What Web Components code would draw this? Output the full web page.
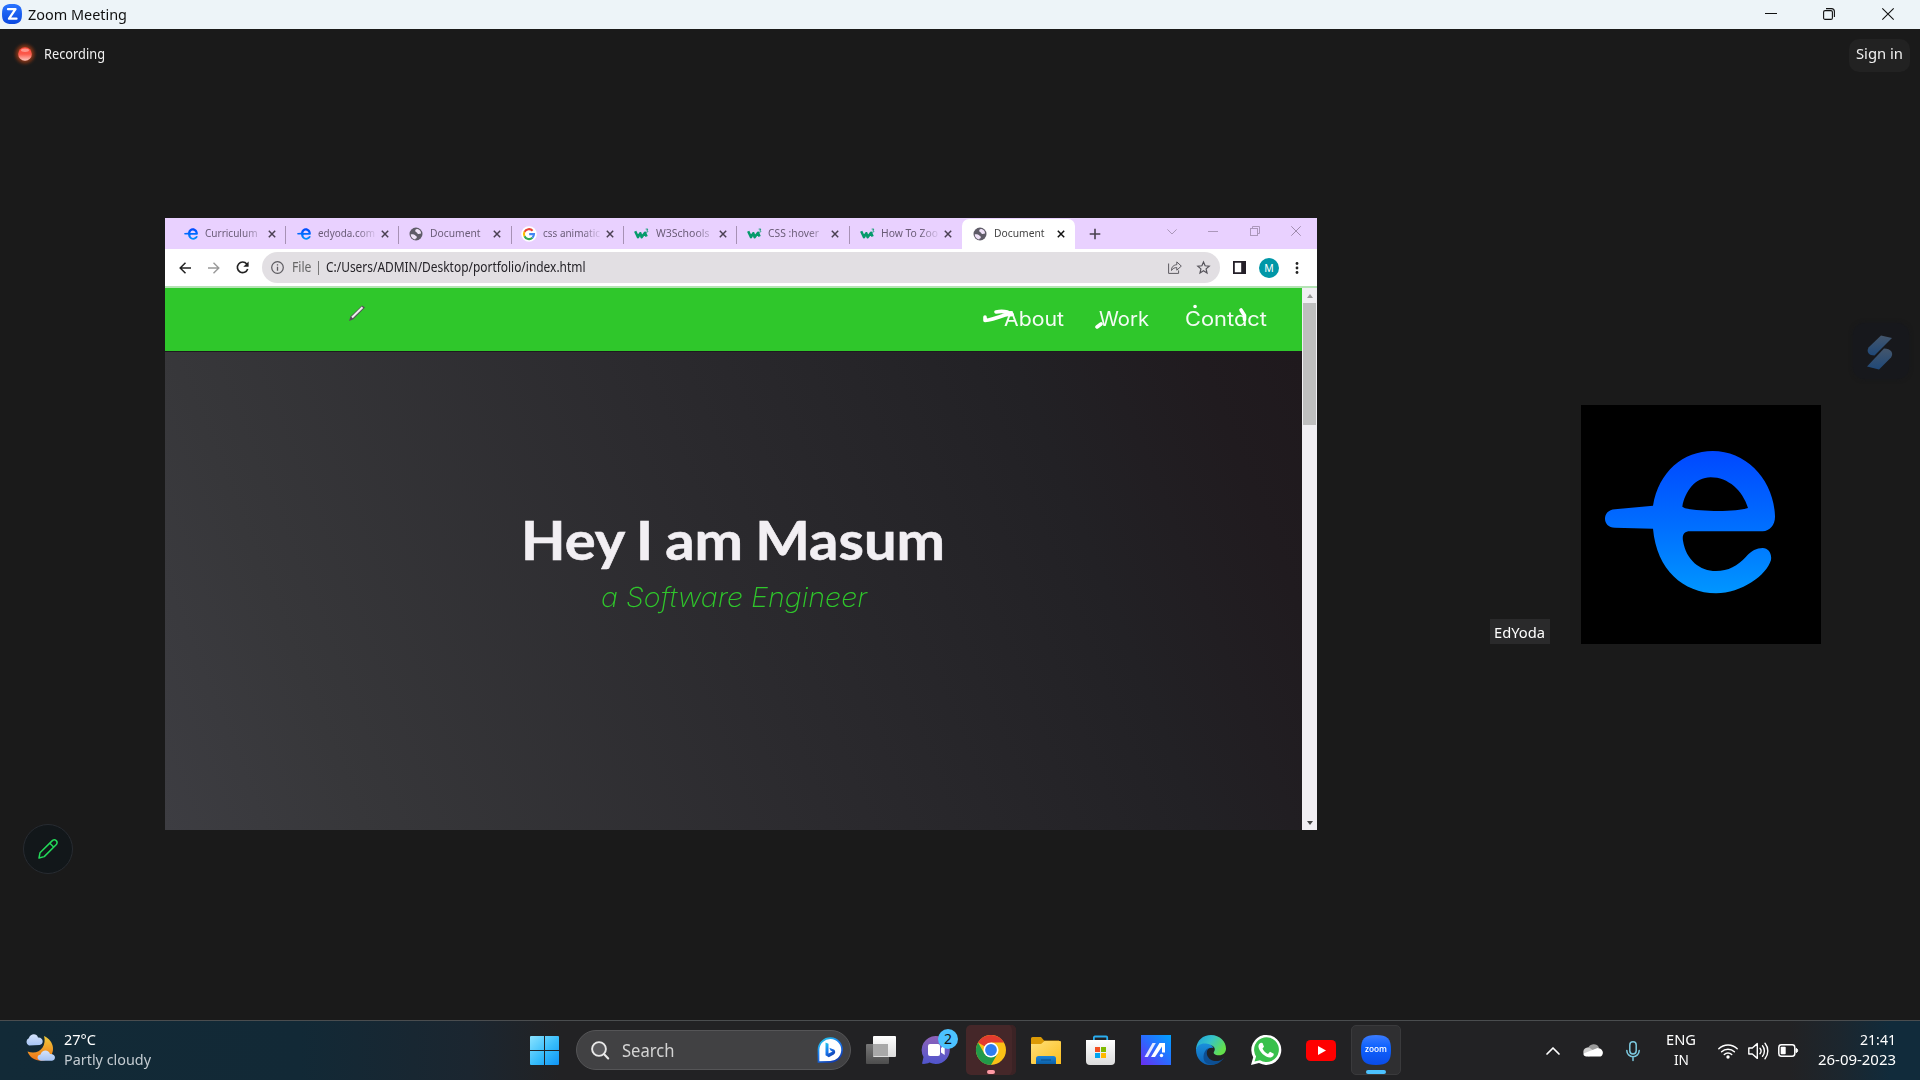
<!DOCTYPE html>
<html lang="en">
<head>
<meta charset="utf-8">
<title>Zoom Meeting</title>
<style>
html,body{margin:0;height:100%;overflow:hidden;background:#1a1a1a;font-family:"Noto Sans","Open Sans",sans-serif}
</style>
</head>
<body>
<meeting-desktop></meeting-desktop>
<script>
const define = (name, css, html, ready) => customElements.define(name, class extends HTMLElement {
  constructor(){ super(); this.attachShadow({mode:'open'}); }
  connectedCallback(){
    if (this.done) return; this.done = true;
    this.shadowRoot.innerHTML = `<style>:host{box-sizing:border-box;display:block}*{box-sizing:border-box}${css}</style>` + (typeof html === 'function' ? html(this) : html);
    if (ready) ready(this);
  }
});

/* One line of text squeezed or stretched to a given width */
define('fit-text', `:host{display:block;flex:none;white-space:nowrap}span{display:inline-block;transform-origin:0 50%}`,
  el => `<span>${el.getAttribute('text')}</span>`,
  el => {
    const w = +el.getAttribute('w'), s = el.shadowRoot.querySelector('span');
    const natural = s.getBoundingClientRect().width;
    el.style.width = w + 'px';
    s.style.transform = `scaleX(${w / natural})`;
    s.style.marginRight = Math.min(0, w - natural) + 'px';
  });

const E_MARK = `<path fill="url(#eg)" fill-rule="evenodd" d="M549 347C566 245 640 183 728 183C830 183 911 270 915 378C916 405 900 423 878 424L660 424C642 424 636 435 639 452C648 510 690 543 738 543C775 543 803 527 828 500C845 482 860 474 878 474C895 474 906 490 903 510C890 555 815 610 738 610C640 608 560 540 549 416L435 413C395 412 395 360 435 358ZM637 350C645 305 675 262 722 262C775 262 818 302 834 354C800 366 700 366 645 355Z"/>`;
const E_GRAD = `<defs><linearGradient id="eg" x1="0" y1="0" x2="0" y2="1"><stop offset="0" stop-color="#0048ff"/><stop offset=".5" stop-color="#006cff"/><stop offset="1" stop-color="#0096ff"/></linearGradient></defs>`;

const ICONS = {
  zoomz: [20,20,`<defs><linearGradient id="z" x2="0" y2="1"><stop stop-color="#2a74ff"/><stop offset="1" stop-color="#0b49e0"/></linearGradient></defs><path d="M10 0C17.5 0 20 2.5 20 10S17.500 20 10 20 0 17.500 0 10 2.500 0 10 0Z" fill="url(#z)"/><path d="M6 5.200h7.500L7 14.700h7.500" fill="none" stroke="#fff" stroke-width="2.300" stroke-linecap="round" stroke-linejoin="round"/>`],
  min: [12,12,`<path d="M0 5.500h12" stroke="#111" stroke-width="1"/>`],
  restore: [12,12,`<rect x=".6" y="2.600" width="8.800" height="8.800" rx="1.500" fill="none" stroke="#111" stroke-width="1.100"/><path d="M3 .6h5.400a3 3 0 0 1 3 3V9" fill="none" stroke="#111" stroke-width="1.100"/>`],
  close: [12,12,`<path d="M.3.3l11.400 11.400M11.700.3.3 11.700" stroke="#111" stroke-width="1.100"/>`],
  rec: [26,26,`<defs><radialGradient id="g"><stop offset=".45" stop-color="#9a3c1c"/><stop offset=".7" stop-color="#5c2a16" stop-opacity=".8"/><stop offset="1" stop-color="#1a1a1a" stop-opacity="0"/></radialGradient><linearGradient id="r" x2="0" y2="1"><stop stop-color="#ff4a3c"/><stop offset=".5" stop-color="#fb584a"/><stop offset="1" stop-color="#ffc9c0"/></linearGradient></defs><circle cx="13" cy="13" r="13" fill="url(#g)"/><circle cx="13" cy="13" r="6.800" fill="url(#r)"/><ellipse cx="13" cy="9.300" rx="4" ry="1.700" fill="#ffa59b" opacity=".8"/>`],
  sband: [26,35,`<defs><linearGradient id="a" x2="0" y2="1"><stop stop-color="#44566c"/><stop offset="1" stop-color="#1f4878"/></linearGradient></defs><path d="M14 .5 25 3 7.500 20.500C2 20.500-1 17 1.500 12.500Z" fill="url(#a)"/><path d="M17 13.500C24 13.500 27 18 24 22.500L12 34.500 0 31.500Z" fill="url(#a)"/>`],
  pencil: [20,20,`<g fill="none" stroke="#23d959" stroke-width="1.500" stroke-linejoin="round"><path d="M1 19 2 13.800 14.600 1.400c2.600-1.800 5.600 1.200 4 3.800L6.200 17.600Z"/><path d="M11.800 4.200l4.100 4.100"/></g>`],
  e: [14,12,`${E_GRAD}<svg viewBox="400 180 520 433" width="14" height="12">${E_MARK}</svg>`],
  globe: [14,14,`<circle cx="7" cy="7" r="6.500" fill="#5f5c68"/><path d="M8.500 1.900C6.500 1.700 6 3 6.300 4.200 6.600 5.300 8 5 8.300 6.200s2.500.6 3.700.4c.3-2-1-4.200-3.500-4.700Z" fill="#efe2f8"/><path d="M1.800 7.200c1.700-.2 4 .2 4.600 1.300s1.600.6 1.400 1.900-1.500.8-1.600 2C3.500 12 1.600 9.500 1.800 7.200Z" fill="#efe2f8"/>`],
  google: [16,16,`<circle cx="8" cy="8" r="7.800" fill="#fff"/><g fill="none" stroke-width="2.100"><path d="M11.600 4.700A5 5 0 0 0 3.500 5.900" stroke="#ea4335"/><path d="M3.500 5.800a5 5 0 0 0 0 4.500" stroke="#fbbc05"/><path d="M3.500 10.200a5 5 0 0 0 7.900 1.600" stroke="#34a853"/><path d="M11.400 11.700A5 5 0 0 0 13 8.100H8.200" stroke="#4285f4"/></g>`],
  w3: [15,12,`<path d="M1.200 3.200 4 9.200 6.300 5.200 7.600 9.200 11 4.800 12.600 8.600" fill="none" stroke="#069b6c" stroke-width="2.500" stroke-linejoin="round"/><path d="M11.700 1.100h2.200l-1 1.300c1.600.3 1.200 2.300-1.300 1.700" fill="none" stroke="#069b6c" stroke-width=".9"/>`],
  x: [8,8,`<path d="M.8.8l6.400 6.400M7.200.8.8 7.200" stroke="currentColor" stroke-width="1.500"/>`],
  plus: [12,12,`<path d="M6 .7v10.600M.7 6h10.600" stroke="#49424f" stroke-width="1.600"/>`],
  cchev: [10,6,`<path d="M.4.4 5 5 9.600.4" fill="none" stroke="#ab97ba"/>`],
  cmin: [10,6,`<path d="M0 2.500h10" stroke="#ab97ba"/>`],
  crest: [10,10,`<rect x=".5" y="2.500" width="7" height="7" fill="none" stroke="#ab97ba"/><path d="M2.500 2.500v-2h7v7h-2" fill="none" stroke="#ab97ba"/>`],
  cclose: [10,10,`<path d="M.3.3l9.400 9.400M9.700.3.3 9.700" stroke="#a08cae"/>`],
  back: [12,12,`<path d="M12 6H1.200M6.500.8 1.200 6l5.300 5.200" fill="none" stroke="currentColor" stroke-width="1.500"/>`],
  fwd: [12,12,`<path d="M0 6h10.800M5.500.8 10.800 6l-5.300 5.200" fill="none" stroke="currentColor" stroke-width="1.400"/>`],
  reload: [13,13,`<path d="M10.800 3A5.300 5.300 0 1 0 11.700 8" fill="none" stroke="#222" stroke-width="1.600"/><path d="M12.600.4v5.300H7.300Z" fill="#222"/>`],
  info: [13,13,`<circle cx="6.500" cy="6.500" r="5.800" fill="none" stroke="#5c5a60" stroke-width="1.200"/><path d="M6.500 5.700v4M6.500 3.300v1.300" stroke="#5c5a60" stroke-width="1.300"/>`],
  share: [14,13,`<g fill="none" stroke="#5d5b61"><path d="M.6 2.500v9.900h10v-3"/><path d="M3.500 9.500C3.500 5.500 6 3.900 8.800 3.700V.9l4.500 4.200-4.500 4.100V6.600C6.500 6.600 5 7.200 3.500 9.500Z"/></g>`],
  star: [13,13,`<path d="M6.500 1 8.100 4.800l4.100.4-3.100 2.700.9 4.100-3.500-2.200L3 12l.9-4.100L.8 5.200l4.100-.4Z" fill="none" stroke="#55535a" stroke-width="1.200"/>`],
  side: [13,13,`<path d="M0 0h13v13H0ZM1.800 1.800v9.400h6.400V1.800Z" fill="#241f28" fill-rule="evenodd"/>`],
  dots: [4,12,`<g fill="#222"><circle cx="2" cy="1.500" r="1.400"/><circle cx="2" cy="6" r="1.400"/><circle cx="2" cy="10.500" r="1.400"/></g>`],
  weather: [30,28,`<defs><linearGradient id="m" x2="0" y2="1"><stop stop-color="#f0cc3c"/><stop offset="1" stop-color="#ef7216"/></linearGradient><linearGradient id="c" x2="0" y2="1"><stop stop-color="#d4e2fb"/><stop offset="1" stop-color="#a6c4f5"/></linearGradient></defs><path d="M19 2C30 7 31 20 22 25.500 14 29 5 25 2.500 17.500 14 22 22 12 19 2Z" fill="url(#m)"/><path d="M4 11.500a4 4 0 0 1-.3-7.300C5.500-.8 12-.8 13 3.600c6-.4 6 7.400 1.600 7.400Z" fill="url(#c)"/><path d="M16 26.700c-4.500-.5-4.500-5.700-.5-6.200 1.500-5.300 8.500-5 9.500-.5 6-.5 6.500 6 2 6.700Z" fill="url(#c)"/>`],
  win: [29,29,`<defs><linearGradient id="w" x2="1" y2="1"><stop stop-color="#8ae3ff"/><stop offset=".55" stop-color="#36bcfb"/><stop offset="1" stop-color="#0f93f5"/></linearGradient></defs><path d="M1 0h13v14H0V1a1 1 0 0 1 1-1ZM15 0h13a1 1 0 0 1 1 1v13H15ZM0 15h14v14H1a1 1 0 0 1-1-1ZM15 15h14v13a1 1 0 0 1-1 1H15Z" fill="url(#w)"/>`],
  search: [18,19,`<circle cx="8" cy="8" r="6.900" fill="#5a5a5d" stroke="#e9e9e9" stroke-width="1.900"/><path d="M12.900 13 17.200 17.500" stroke="#e9e9e9" stroke-width="2.100" stroke-linecap="round"/>`],
  bing: [26,26,`<defs><linearGradient id="b" x1="0" x2=".6" y2="1"><stop stop-color="#27cfe8"/><stop offset=".5" stop-color="#1b7df0"/><stop offset="1" stop-color="#123fb3"/></linearGradient></defs><path d="M1.500 25V12.500A11.800 11.800 0 1 1 13 24.800Z" fill="#fff" stroke="url(#b)" stroke-width="1.700"/><path d="M8.500 5.500 11.500 6.800v9.700l4-2-2-1-1.200-2.800 5 2c1.500 1.700 1 3.800-.5 4.700l-5 2.900-3.300-2Z" fill="url(#b)"/>`],
  task: [30,28,`<defs><linearGradient id="t" x2="0" y2="1"><stop stop-color="#fff"/><stop offset="1" stop-color="#dcdcdc"/></linearGradient><linearGradient id="u" x2="0" y2="1"><stop stop-color="#777"/><stop offset="1" stop-color="#4d4d4d"/></linearGradient></defs><rect y="8" width="23" height="20" rx="1" fill="url(#u)"/><rect x="7" width="23" height="21" rx="1" fill="url(#t)"/><path d="M7 8h15v12H7Z" fill="#a8a8a8"/>`],
  chat: [30,30,`<defs><linearGradient id="p" x2="0" y2="1"><stop stop-color="#8f62b8"/><stop offset="1" stop-color="#4f55cd"/></linearGradient></defs><path d="M14.500 1a14 14 0 1 1-6 26.500C6 29 3 29 1 28.800L2.500 22A14 14 0 0 1 14.500 1Z" fill="url(#p)"/><rect x="7" y="9" width="12" height="12" rx="2" fill="#fff"/><path d="m20 13 3.700-3v10L20 17.500Z" fill="#fff"/>`],
  chrome: [30,30,`<circle cx="15" cy="15" r="15" fill="#fbc116"/><path d="M15 15 2 7.500A15 15 0 0 1 28 7.500H15Z" fill="#e33b2e"/><path d="M2 7.500A15 15 0 0 0 15 30l6.500-11.300L15 22 8.500 18.700Z" fill="#229a49"/><circle cx="15" cy="15" r="7.600" fill="#fff"/><circle cx="15" cy="15" r="5.900" fill="#2f7df0"/>`],
  folder: [30,27,`<defs><linearGradient id="f" x2="1" y2="1"><stop stop-color="#ffe07a"/><stop offset="1" stop-color="#fcbe1e"/></linearGradient><linearGradient id="h" x2="0" y2="1"><stop stop-color="#1e85d8"/><stop offset="1" stop-color="#0b60a8"/></linearGradient></defs><path d="M0 1.500A1.500 1.500 0 0 1 1.500 0H10l3 3.500h15L28 8H0Z" fill="#dc9a06"/><path d="M0 7h10l3.500-3H29a1 1 0 0 1 1 1v22H1a1 1 0 0 1-1-1Z" fill="url(#f)"/><path d="M5 27v-5.500A2.500 2.500 0 0 1 7.500 19h15a2.500 2.500 0 0 1 2.500 2.500V27Z" fill="url(#h)"/><path d="M10 23h10" stroke="#0a4c87"/>`],
  store: [30,30,`<defs><linearGradient id="s" x2="0" y2="1"><stop stop-color="#fff"/><stop offset="1" stop-color="#dcdcdc"/></linearGradient></defs><path d="M7.900 7V2.500a1 1 0 0 1 1-1h11.300a1 1 0 0 1 1 1V7" fill="none" stroke="#2aaef0" stroke-width="1.800"/><path d="M0 5h29v21a4 4 0 0 1-4 4H4a4 4 0 0 1-4-4Z" fill="url(#s)"/><path d="M9 12h5v5H9Z" fill="#f25022"/><path d="M15 12h5v5h-5Z" fill="#7fba00"/><path d="M9 18h5v5H9Z" fill="#00a4ef"/><path d="M15 18h5v5h-5Z" fill="#ffb900"/>`],
  asus: [30,30,`<defs><linearGradient id="y" x1="0" y1="1" x2="1" y2="0"><stop stop-color="#6a2df0"/><stop offset=".5" stop-color="#2a6bff"/><stop offset="1" stop-color="#00a2ff"/></linearGradient></defs><path d="M0 0h30v30H0Z" fill="url(#y)"/><path d="M3.500 22 11.500 8h3.300L6.800 22Z" fill="#e4e9ff"/><path d="M10 22 18.500 8H24v9.500h-3v-6L14 22Z" fill="#fff"/><circle cx="20.500" cy="20.500" r="1.700" fill="#fff"/>`],
  edge: [30,30,`<defs><linearGradient id="k" x2="1" y2=".5"><stop stop-color="#1c9fdc"/><stop offset=".5" stop-color="#36c3c9"/><stop offset="1" stop-color="#63e04c"/></linearGradient><linearGradient id="l" x2="0" y2="1"><stop stop-color="#1a8fdc"/><stop offset="1" stop-color="#0d62b4"/></linearGradient></defs><path d="M0 14C1 5 7 0 15 0c9 0 15 6.500 15 13.500 0 4-3 6.800-7 6.800-4.500 0-6-2-5-3.500 2-3 0-6-3.500-6.500C9 9.500 3 11 0 15Z" fill="url(#k)"/><path d="M0 15C1 10 5 8 10 8.500c3.500.3 6.500 1.800 7.500 4.500-4.500-1.500-8 2-7.500 6.500.4 4 4 9 9 9.800C9 32.500 0 25 0 15Z" fill="url(#l)"/><path d="M14 12.500c-3.500 2-4 6-2 9.500s7 4.500 10 4 5-2 6-3.500C24 30 14 32 9 27 6 23 7.500 14 14 12.500Z" fill="#0d4f93"/>`],
  whats: [30,30,`<path d="M0 30l2.200-7.800A15 15 0 1 1 8 28Z" fill="#fff"/><path d="M3.500 26.600l1.600-5.200A12.400 12.400 0 1 1 9 25.200Z" fill="#39c04c"/><path d="M10 7.800c-1.500.3-2.800 2-2.500 4.200.6 4.500 6.500 10.500 11.500 10.500 2 0 4-1.500 3.800-3.800l-3.800-2-2 2.200c-2.500-.8-4.500-2.800-5.500-5.300l1.500-1.800L11.500 8Z" fill="#fff"/>`],
  yt: [30,21,`<rect width="30" height="21" rx="4.500" fill="#f00"/><path d="M12 6v9l8-4.500Z" fill="#fff"/>`],
  zoomapp: [30,30,`<defs><linearGradient id="v" x2="0" y2="1"><stop stop-color="#3c7dff"/><stop offset=".4" stop-color="#0f62fe"/><stop offset="1" stop-color="#0a4ce8"/></linearGradient></defs><path d="M15 0C26.500 0 30 3.500 30 15S26.500 30 15 30 0 26.500 0 15 3.500 0 15 0Z" fill="url(#v)"/>`],
  up: [14,8,`<path d="M1 7l6-6 6 6" fill="none" stroke="#fff" stroke-width="1.700" stroke-linecap="round" stroke-linejoin="round"/>`],
  cloud: [20,14,`<path d="M5 5.500A6 6 0 0 1 16 4.500L14 8 3 9Z" fill="#9b9b9b"/><path d="M.5 10.500C-.5 6 3 4 6 4.500l6 4-6 5Z" fill="#cfcfcf"/><path d="M3 13.500C1 13 .3 12 .5 10.500L14.500 5C18 5 20.300 8 19.800 10.500S18 13.500 16.500 13.500Z" fill="#fff"/>`],
  mic: [14,20,`<g fill="none" stroke="#7cc8de" stroke-width="1.500" stroke-linecap="round"><rect x="3.800" y=".8" width="6.400" height="12.200" rx="3.200"/><path d="M.8 9.500a6.200 6.200 0 0 0 12.400 0M7 16v3.500"/></g>`],
  wifi: [20,16,`<g fill="none" stroke="#fff" stroke-width="1.500" stroke-linecap="round"><path d="M.8 5.800a13 13 0 0 1 18.400 0M3.600 8.800a9 9 0 0 1 12.800 0M6.300 11.500a5.300 5.300 0 0 1 7.400 0"/></g><circle cx="10" cy="14" r="1.700" fill="#fff"/>`],
  vol: [21,18,`<g fill="none" stroke="#fff" stroke-width="1.400" stroke-linecap="round" stroke-linejoin="round"><path d="M.8 6h3.500L9.300 1.600v14.800L4.300 12H.8Z"/><path d="M12 6.200a4.500 4.500 0 0 1 0 5.600M14.500 3.800a8 8 0 0 1 0 10.400M17 1.300a12 12 0 0 1 0 15.400"/></g>`],
  batt: [20,13,`<rect x=".8" y=".8" width="16" height="11.400" rx="2.600" fill="none" stroke="#fff" stroke-width="1.500"/><rect x="2.700" y="2.800" width="5" height="7.400" rx=".8" fill="#fff"/><path d="M18 4.500c2.200 0 2.200 4 0 4Z" fill="#fff" stroke="#fff"/>`],
  pen: [18,18,`<path d="M1 17 2.500 12.500 14 1.500 17 3.500 5 15.500Z" fill="#56505a"/><path d="M4 13.500 14.500 3.300" stroke="#eee" stroke-width="2"/>`]
};
define('ui-icon', `:host{flex:none;line-height:0}svg{display:block;overflow:visible}`,
  el => { const [w,h,b] = ICONS[el.getAttribute('n')]; return `<svg width="${w}" height="${h}" viewBox="0 0 ${w} ${h}">${b}</svg>`; });

define('title-bar', `:host{display:flex;height:29px;flex:none;background:#edf4f8;padding:4px 26px 0 2px;color:#111}
  fit-text{font-size:15px;line-height:21px;margin:0 0 0 5.500px}.c{margin:4px 0 0 auto;display:flex}`,
  `<ui-icon n="zoomz"></ui-icon><fit-text w="99" text="Zoom Meeting"></fit-text>
   <div class="c"><ui-icon n="min"></ui-icon><ui-icon n="restore" style="margin:0 47px 0 46px"></ui-icon><ui-icon n="close"></ui-icon></div>`);

define('meeting-header', `:host{display:flex;justify-content:space-between;height:43px;padding:10px 10px 0 12px;color:#f0f0f0}
  .r{display:flex;gap:6px;height:26px;margin-top:2px}.r fit-text{font-size:13.500px;line-height:20px;margin-top:3px}
  .s{width:61px;height:33px;border-radius:10px;background:#222;padding:3px 7px}.s fit-text{font-size:15px;line-height:22px}`,
  `<div class="r"><ui-icon n="rec"></ui-icon><fit-text w="61" text="Recording"></fit-text></div><div class="s"><fit-text w="47" text="Sign in"></fit-text></div>`);

define('browser-tab', `:host{width:112.700px;height:30px;flex:none;display:flex;align-items:center;position:relative;padding-left:9px;color:#6a5c77}
  :host([on]){background:#fff;border-radius:7px 7px 0 0;color:#444}
  .i{width:17px;display:flex;justify-content:center}.t{width:58px;margin:-2.500px 0 0 5.500px;height:20px;font-size:11.500px;line-height:20px}
  .f{-webkit-mask-image:linear-gradient(90deg,#000 68%,rgba(0,0,0,.15) 98%)}
  .x{margin-left:5px;color:#4b4053}:host([on]) .x{color:#111}
  i{position:absolute;right:0;top:7px;width:1px;height:18px;background:#a791b5}:host([on]) i,:host([last]) i{display:none}`,
  el => `<div class="i"><ui-icon n="${el.getAttribute('icon')}"></ui-icon></div><div class="t ${el.hasAttribute('fade')?'f':''}"><fit-text w="${el.getAttribute('w')}" text="${el.getAttribute('label')}"></fit-text></div><ui-icon class="x" n="x"></ui-icon><i></i>`);

define('tab-strip', `:host{display:flex;height:31px;background:#e9d1ff;padding:1px 16px 0 8.500px}
  .p{margin:9px 0 0 13.500px}.c{margin:7px 0 0 auto;display:flex;gap:31.300px}.c ui-icon:first-child,.c ui-icon:nth-child(2){margin-top:3px}`,
  `<browser-tab icon="e" label="Curriculum" w="52.500" fade></browser-tab><browser-tab icon="e" label="edyoda.com" w="57" fade></browser-tab><browser-tab icon="globe" label="Document" w="50.500"></browser-tab><browser-tab icon="google" label="css animatic" w="57" fade></browser-tab><browser-tab icon="w3" label="W3Schools" w="53.500" fade></browser-tab><browser-tab icon="w3" label="CSS :hover" w="51" fade></browser-tab><browser-tab icon="w3" label="How To Zoo" w="57" fade last></browser-tab><browser-tab icon="globe" label="Document" w="50.500" on></browser-tab>
   <ui-icon class="p" n="plus"></ui-icon><div class="c"><ui-icon n="cchev"></ui-icon><ui-icon n="cmin"></ui-icon><ui-icon n="crest"></ui-icon><ui-icon n="cclose"></ui-icon></div>`);

define('address-bar', `:host{display:flex;align-items:center;height:39px;background:#fff;border-bottom:2px solid #b5e3b5;padding:0 18px 0 13.500px}
  .b{flex:1;height:31px;border-radius:16px;background:#e2dfe3;display:flex;align-items:center;padding:0 10px 0 9.500px;margin:0 0 0 13px;font-size:13.500px;line-height:20px;color:#252328}
  .b i{width:1px;height:14px;background:#777;margin:0 7.500px 0 6.500px}.b .sp{flex:1}.b fit-text{margin-top:-1px}
  .m{width:20px;height:20px;border-radius:50%;background:#0097a7;color:#fff;font-size:10.500px;line-height:20px;text-align:center;margin:0 16px 0 13px}`,
  `<ui-icon n="back" style="color:#222"></ui-icon><ui-icon n="fwd" style="color:#999;margin:0 16px 0 17px"></ui-icon><ui-icon n="reload"></ui-icon>
   <div class="b"><ui-icon n="info"></ui-icon><fit-text style="margin-left:7.500px;color:#666" w="19.500" text="File"></fit-text><i></i><fit-text w="259.500" text="C:/Users/ADMIN/Desktop/portfolio/index.html"></fit-text><span class="sp"></span><ui-icon n="share"></ui-icon><ui-icon n="star" style="margin-left:15px"></ui-icon></div>
   <ui-icon n="side" style="margin-left:13px"></ui-icon><div class="m">M</div><ui-icon n="dots"></ui-icon>`);

define('site-page', `:host{flex:1;display:flex;flex-direction:column;min-width:0}
  nav{position:relative;height:63px;flex:none;background:#2fc72b;display:flex;justify-content:flex-end;padding:15px 35.500px 0 0;color:#f4fbf4;font:400 20px/32px Inter,"Open Sans",sans-serif;font-feature-settings:"cv11"}
  nav fit-text+fit-text{margin-left:35.500px}nav svg{position:absolute;left:0;top:0}
  .pen{position:absolute;left:183px;top:15.500px}
  .h{flex:1;border-top:1px solid #1d1b1e;background:linear-gradient(68deg,#3d3d42 0%,#37373a 15%,#2b2a2e 50%,#222125 78%,#201b1f 92%,#1f191d 100%);display:flex;flex-direction:column;align-items:center;padding-top:152px}
  .h1{font:700 54px/72px Lato,sans-serif;word-spacing:-1.800px;color:#f2eff3;-webkit-text-stroke:.6px #f2eff3;margin-left:-2px}
  .h2{font:italic 200 27.500px/40px Inter,sans-serif;font-feature-settings:"cv11";color:#2fc72b;margin-top:.5px}`,
  `<nav><fit-text w="60" text="About"></fit-text><fit-text w="50" text="Work"></fit-text><fit-text w="82" text="Contact"></fit-text>
   <svg width="1137" height="63"><g fill="none" stroke="#fff" stroke-width="3.600" stroke-linecap="round" stroke-linejoin="round"><path d="M820 29v3.500c6-.5 13-3 20-5.500 4-1.500 6 .5 7-.5-5-3.500-11-3.500-16-2.500M932 39l4-3"/><path d="M1076 22l3.500 5.500v4M1030 18.500h.1" /></g></svg><ui-icon class="pen" n="pen"></ui-icon></nav>
   <div class="h"><fit-text class="h1" w="424" text="Hey I am Masum"></fit-text><fit-text class="h2" w="266" text="a Software Engineer"></fit-text></div>`);

define('scroll-rail', `:host{width:15px;background:#f1eff3;display:flex;flex-direction:column;align-items:center;padding:6px 0 5px}
  .u,.d{border:3.500px solid transparent;border-top:0;border-bottom:4px solid #999;width:0;height:0}.d{border-bottom:0;border-top:4px solid #444}
  .t{width:13px;height:122px;background:#bfbfbf;margin:5px 0 auto}`,
  `<div class="u"></div><div class="t"></div><div class="d"></div>`);

define('shared-browser', `:host{display:flex;flex-direction:column;width:1152px;height:612px;flex:none}.p{flex:1;display:flex}`,
  `<tab-strip></tab-strip><address-bar></address-bar><div class="p"><site-page></site-page><scroll-rail></scroll-rail></div>`);

define('participant-tile', `:host{display:flex;align-items:flex-end;gap:31px;height:239px}
  .n{width:60px;height:25px;background:#2a2a2b;padding:3px 4px;color:#fff;font-size:15px;line-height:21px}
  .v{width:240px;height:239px;background:#000}svg{display:block}`,
  `<div class="n"><fit-text w="51" text="EdYoda"></fit-text></div><div class="v"><svg width="240" height="239" viewBox="333 45 720 717">${E_GRAD}${E_MARK}</svg></div>`);

define('meeting-stage', `:host{position:relative;flex:1;background:#1a1a1a}
  .m{display:flex;padding:146px 0 0 165px}participant-tile{margin:187px 0 0 173px}
  .s{position:absolute;right:11px;top:294px;width:56px;height:56px;border-radius:12px;background:#17181c;box-shadow:0 0 4px #17181c;padding:12px 14px}
  .p{position:absolute;left:23px;top:795px;width:50px;height:50px;border-radius:50%;background:#12171a;border:1px solid #272b31;padding:14px}`,
  `<meeting-header></meeting-header><div class="m"><shared-browser></shared-browser><participant-tile></participant-tile></div>
   <div class="s"><ui-icon n="sband"></ui-icon></div><div class="p"><ui-icon n="pencil"></ui-icon></div>`);

define('task-app', `:host{position:relative;width:50px;height:50px;border-radius:5px;display:flex;align-items:center;justify-content:center}
  :host([active=red]){background:#452729;box-shadow:inset -5px 0 0 -1px #3b2325}:host([active=grey]){background:#2f2f31;border:1px solid #3a3a3c}
  ::slotted(*){position:absolute}b{position:absolute;bottom:1px;height:4px;border-radius:2px}
  :host([active=red]) b{width:8px;background:#ff99a4}:host([active=grey]) b{width:20px;bottom:0;background:#4cc2ff}`,
  el => `<ui-icon n="${el.getAttribute('icon')}"></ui-icon><slot></slot><b></b>`);

define('task-bar', `:host{display:flex;align-items:center;height:60px;flex:none;border-top:1px solid #4a4d4f;color:#fff;font-size:15px;line-height:20px;
   background:linear-gradient(90deg,#122a37 0,#122936 300px,#1b2630 470px,#222224 560px,#222224 1790px,#1c262e 1840px,#112b3b 1890px,#112b3b 100%)}
  .w{display:flex;gap:8.500px;width:505px;padding-left:25px}.w ui-icon{margin-top:1px}.w div,.l,.d{margin-top:-4px}
  .q{width:275px;height:40px;border-radius:20px;background:#414143;border:1px solid #555557;display:flex;align-items:center;padding:0 7px 0 14px;margin:-1px 5px 0 17px;font-size:17.500px;color:#d3d3d3}
  .q fit-text{margin:-1px auto 0 12.500px}.a{display:flex;gap:5px;margin-top:-1px}
  .badge{left:27px;top:4px;width:20px;height:20px;border-radius:50%;background:#4cc2ff;color:#111;text-align:center;font-size:14px;line-height:20px}
  .z{color:#fff;font:600 8.500px/10px "Open Sans",sans-serif;top:18px;left:13px}
  .t{margin-left:auto;display:flex;align-items:center;padding-right:24px}.l,.d{display:flex;flex-direction:column;align-items:center}.d{align-items:flex-end}`,
  `<div class="w"><ui-icon n="weather"></ui-icon><div><fit-text w="32" text="27°C"></fit-text><fit-text style="color:#c3cbd1" w="87" text="Partly cloudy"></fit-text></div></div>
   <ui-icon n="win" style="margin-left:25px"></ui-icon>
   <div class="q"><ui-icon n="search"></ui-icon><fit-text w="52.500" text="Search"></fit-text><ui-icon n="bing"></ui-icon></div>
   <div class="a"><task-app icon="task"></task-app><task-app icon="chat"><span class="badge">2</span></task-app><task-app icon="chrome" active="red"></task-app><task-app icon="folder"></task-app><task-app icon="store"></task-app><task-app icon="asus"></task-app><task-app icon="edge"></task-app><task-app icon="whats"></task-app><task-app icon="yt"></task-app><task-app icon="zoomapp" active="grey"><fit-text class="z" w="22" text="zoom"></fit-text></task-app></div>
   <div class="t"><ui-icon n="up"></ui-icon><ui-icon n="cloud" style="margin:-2px 23px 0 23px"></ui-icon><ui-icon n="mic"></ui-icon>
    <div class="l" style="margin:-4px 22px 0 26px"><fit-text w="30" text="ENG"></fit-text><fit-text w="15" text="IN"></fit-text></div>
    <ui-icon n="wifi"></ui-icon><ui-icon n="vol" style="margin:0 9px 0 10px"></ui-icon><ui-icon n="batt"></ui-icon>
    <div class="d" style="margin-left:20px"><fit-text w="36" text="21:41"></fit-text><fit-text w="78" text="26-09-2023"></fit-text></div></div>`);

define('meeting-desktop', `:host{display:flex;flex-direction:column;width:1920px;height:1080px;overflow:hidden}`,
  `<title-bar></title-bar><meeting-stage></meeting-stage><task-bar></task-bar>`);
</script>
</body>
</html>
